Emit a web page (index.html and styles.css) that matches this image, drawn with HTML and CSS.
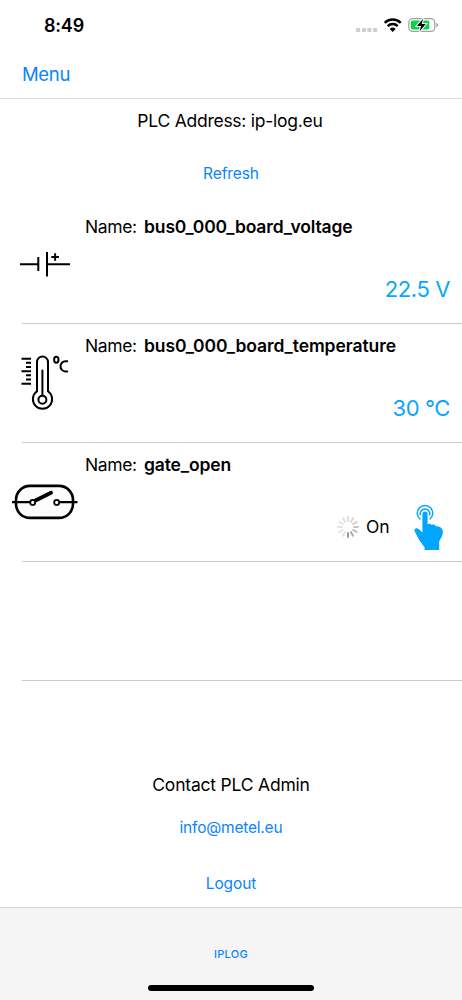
FILE: index.html
```html
<!DOCTYPE html>
<html lang="en">
<head>
<meta charset="utf-8">
<title>IPLOG</title>
<link rel="stylesheet" href="styles.css">
</head>
<body>
<div class="screen">
  <header class="status">
    <span class="time">8:49</span>
    <svg class="status-icons" width="90" height="20" viewBox="352 15 90 20" aria-hidden="true">
      <g fill="#cfcfcf"><rect x="356" y="28" width="4.2" height="4" rx="1"/><rect x="362" y="28" width="4.2" height="4" rx="1"/><rect x="367.300" y="28" width="4.200" height="4" rx="1"/><rect x="373" y="28" width="4.200" height="4" rx="1"/></g>
      <g fill="none" stroke="#000" stroke-width="2.500"><path d="M384.700 22.900a11.300 11.300 0 0 1 16 0"/><path d="M387.700 26.200a7 7 0 0 1 10 0"/></g>
      <path d="M389.700 28.900a4.600 4.600 0 0 1 6 0l-3 3z"/>
      <rect x="408.800" y="18.600" width="26" height="12.800" rx="3.800" fill="#fff" stroke="#a0a0a0" stroke-width="1.200"/>
      <path d="M436.300 22.800q1.900 .7 1.900 2.200t-1.900 2.200z" fill="#a0a0a0"/>
      <rect x="410.700" y="20.500" width="18.600" height="9" rx="2" fill="#0bd14c"/>
      <path d="M423.400 18.500L416.800 26h4.300l-1.600 5.500 6.300-7.400h-4.200z" stroke="#fff" stroke-width="2" paint-order="stroke"/>
    </svg>
  </header>
  <nav class="nav"><a class="menu">Menu</a></nav>
  <main class="content">
    <p class="address">PLC Address: ip-log.eu</p>
    <a class="refresh">Refresh</a>
    <section class="list">
      <article class="row">
        <svg class="icon" width="90" height="118" viewBox="0 205 90 118" fill="none" stroke="#000" stroke-width="2" aria-hidden="true">
          <path d="M20 264.300h18M47 264.300h23M38.300 257v14M47 252v24.500"/>
          <path d="M51.300 257h7.600M55.100 253.200v7.600" stroke-width="2"/>
        </svg>
        <div class="body">
          <p class="name"><span class="label">Name:</span><b class="voltage">bus0_000_board_voltage</b></p>
          <p class="value">22.5 V</p>
        </div>
      </article>
      <article class="row">
        <svg class="icon" width="90" height="118" viewBox="0 324 90 118" fill="none" stroke="#000" stroke-width="2" stroke-linecap="round" aria-hidden="true">
          <path d="M37 391.300V362a5.500 5.500 0 0 1 11 0v29.300a9.600 9.600 0 1 1-11 0zM42.400 370.500v25"/>
          <circle cx="42.400" cy="399.700" r="4"/>
          <path stroke-linecap="butt" d="M21.500 358.700H31M26 362.700h5M26 367h5M21.500 371.300H31M26 375.300h5M26 379.500h5M21.500 383.700H31"/>
          <ellipse cx="56.300" cy="359.800" rx="2.200" ry="3"/>
          <path d="M67.200 361.200h-1.700a5 5 0 0 0-5 5.100a5 5 0 0 0 5 5.100h1.700"/>
        </svg>
        <div class="body">
          <p class="name"><span class="label">Name:</span><b class="temperature">bus0_000_board_temperature</b></p>
          <p class="value">30 °C</p>
        </div>
      </article>
      <article class="row">
        <svg class="icon" width="90" height="118" viewBox="0 443 90 118" fill="none" stroke="#000" stroke-width="2.600" aria-hidden="true">
          <rect x="16" y="485.900" width="57" height="32" rx="14" fill="#fcfcfc"/>
          <path d="M12 502.200h18M59 502.200h18.500" stroke-width="2.200"/>
          <path d="M35.500 500.500L51 492.800" stroke-width="3.900" stroke-linecap="round"/>
          <circle cx="32.700" cy="502.400" r="2.500" fill="#fff" stroke-width="1.800"/>
          <circle cx="56.700" cy="502.400" r="2.500" fill="#fff" stroke-width="1.800"/>
        </svg>
        <div class="body">
          <p class="name"><span class="label">Name:</span><b class="gate">gate_open</b></p>
          <div class="control">
            <svg class="spinner" width="24" height="24" viewBox="-12 -12 24 24" stroke-width="2" stroke-linecap="round" aria-hidden="true">
              <path d="M0-6V-10" stroke="#ddd"/>
              <path d="M0-6V-10" stroke="#d4d4d4" transform="rotate(30)"/>
              <path d="M0-6V-10" stroke="#ccc" transform="rotate(60)"/>
              <path d="M0-6V-10" stroke="#c4c4c4" transform="rotate(90)"/>
              <path d="M0-6V-10" stroke="#b8b8b8" transform="rotate(120)"/>
              <path d="M0-6V-10" stroke="#aaa" transform="rotate(150)"/>
              <path d="M0-6V-10" stroke="#999" transform="rotate(180)"/>
              <path d="M0-6V-10" stroke="#e4e4e4" transform="rotate(210)"/>
              <path d="M0-6V-10" stroke="#e4e4e4" transform="rotate(240)"/>
              <path d="M0-6V-10" stroke="#e4e4e4" transform="rotate(270)"/>
              <path d="M0-6V-10" stroke="#e2e2e2" transform="rotate(300)"/>
              <path d="M0-6V-10" stroke="#e0e0e0" transform="rotate(330)"/>
            </svg>
            <span class="state">On</span>
            <svg class="tap" width="32" height="48" viewBox="412 503 32 48" aria-hidden="true">
              <g fill="none" stroke="#00a6ff"><path d="M420.400 519.400a7.700 7.700 0 1 1 9.200 0" stroke-width="1.500"/><path d="M420.400 515.200a4.800 4.800 0 1 1 9.200 0" stroke-width="1.500"/></g>
              <path fill="#00a6ff" d="M422.400 514a2.600 2.600 0 0 1 5.200 0v10.200c1.600-.9 3.200-.6 4.100 .8c1.600-.8 3.500-.3 4.200 1.200c3.600-.5 6.700 1.700 7 5.300c.2 5-2.900 7-3.700 10.500V550h-14.600v-2.500l-5.400-7.500-4.700-9c-.8-3 2.600-3.700 4.400-1.700l3.500 3.200z"/>
            </svg>
          </div>
        </div>
      </article>
      <article class="row"></article>
    </section>
    <footer class="contact">
      <p class="admin">Contact PLC Admin</p>
      <a class="email">info@metel.eu</a>
      <a class="logout">Logout</a>
    </footer>
  </main>
  <div class="tabbar"><span class="tab">IPLOG</span><span class="home"></span></div>
</div>
</body>
</html>
```
FILE: styles.css
```css
* { box-sizing: border-box; }
body { margin: 0; background: #fff; color: #000; font-family: Inter, "Liberation Sans", sans-serif; }
p { margin: 0; }
svg { display: block; flex: none; }
.screen { height: 1000px; display: flex; flex-direction: column; overflow: hidden; }
.status { height: 50px; flex: none; display: flex; justify-content: space-between; padding: 15px 20px 0 44px; }
.time { font-size: 18px; line-height: 21px; font-weight: 600; letter-spacing: -0.2px; }
.nav { height: 49px; flex: none; border-bottom: 1px solid #dcdcdc; padding: 12px 22px; line-height: 24px; color: #0a84ff; }
.menu { font-size: 18.500px; letter-spacing: -0.35px; }
.content { flex: 1; display: flex; flex-direction: column; }
.address { text-align: center; font-size: 17.500px; line-height: 24px; padding: 10px 2px 0 0; letter-spacing: -0.25px; }
.refresh { text-align: center; font-size: 15.500px; line-height: 22px; margin: 30px 0 20px; letter-spacing: -0.1px; color: #0a84ff; }
.list { display: flex; flex-direction: column; }
.row { height: 119px; display: flex; background: linear-gradient(#cbcbcb, #cbcbcb) 22px 100% / 440px 1px no-repeat; }
.icon { margin-right: -5px; }
.body { flex: 1; padding: 10px 12px 0 0; }
.name { display: flex; font-size: 17.500px; line-height: 24px; }
.label { width: 59px; letter-spacing: -0.4px; }
.name b { font-weight: 600; letter-spacing: -0.13px; }
.name .temperature { letter-spacing: -0.07px; }
.value { text-align: right; font-size: 22px; line-height: 28px; margin-top: 36px; letter-spacing: -0.4px; color: #08a6fc; }
.control { display: flex; align-items: flex-start; padding: 26px 4px 0 251px; }
.spinner { margin-top: 12px; }
.state { width: 52px; padding: 12px 0 0 6px; font-size: 17.500px; line-height: 24px; letter-spacing: -0.2px; }
.contact { display: flex; flex-direction: column; text-align: center; padding-top: 92px; color: #0a84ff; }
.admin { font-size: 17.500px; line-height: 24px; letter-spacing: -0.2px; color: #000; }
.email { font-size: 15.500px; line-height: 22px; margin-top: 20px; letter-spacing: -0.2px; }
.logout { font-size: 15.500px; line-height: 22px; margin-top: 34px; letter-spacing: -0.1px; }
.tabbar { height: 93px; flex: none; border-top: 1px solid #d5d4d5; background: #f6f5f6; display: flex; flex-direction: column; align-items: center; padding-top: 38px; }
.tab { font-size: 11px; line-height: 16px; font-weight: 500; letter-spacing: 0.3px; color: #0a84ff; }
.home { width: 166px; height: 6px; margin-top: 23px; border-radius: 3px; background: #000; }
```
